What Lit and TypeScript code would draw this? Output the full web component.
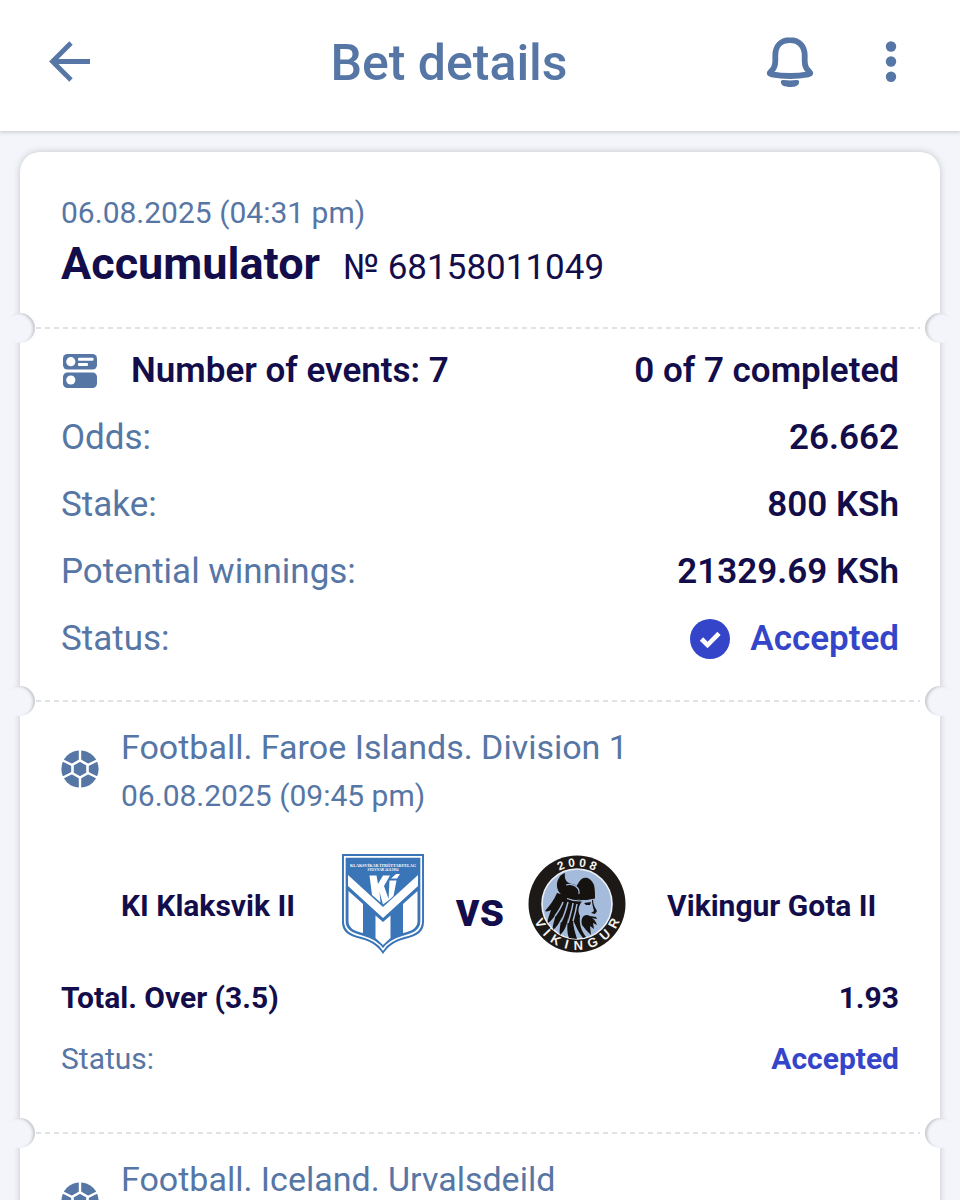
import { LitElement, html, css, svg } from "lit";
import { customElement, property } from "lit/decorators.js";

interface BetEvent {
  league: string;
  start: string;
  home: string;
  away: string;
  market: string;
  odds: string;
  status: string;
}

const backIcon = svg`<svg width="42" height="42" viewBox="0 0 42 42" fill="none" stroke="currentColor" stroke-width="4.8">
  <path d="M41 20.500H4M22 2 3.500 20.500 22 39" />
</svg>`;

const bellIcon = svg`<svg width="48" height="52" viewBox="0 0 48 52" fill="none" stroke="currentColor">
  <path stroke-width="5.800" stroke-linejoin="round" d="M24 4.200C14.500 4.200 9.300 10.500 9.300 19.500V25C9.300 30.500 7.800 32.800 5.200 35.200C3 37.300 3.300 37.800 5.800 38.300C17 40.400 31 40.400 42.200 38.300C44.700 37.800 45 37.300 42.800 35.200C40.200 32.800 38.700 30.500 38.700 25V19.500C38.700 10.500 33.500 4.200 24 4.200Z" />
  <path fill="currentColor" stroke="none" d="M17.500 44C22 44.600 26 44.600 30.500 44C32.500 43.700 33.600 45 33 47C32 50.400 28 51 24 51C20 51 16 50.400 15 47C14.400 45 15.500 43.700 17.500 44Z" />
</svg>`;

const moreIcon = svg`<svg width="12" height="42" viewBox="0 0 12 42" fill="currentColor">
  <circle cx="6" cy="5.500" r="5.200" /><circle cx="6" cy="20.500" r="5.200" /><circle cx="6" cy="35.700" r="5.200" />
</svg>`;

const eventsIcon = svg`<svg width="34" height="34" viewBox="0 0 34 34">
  <rect width="34" height="15.500" rx="4.500" fill="currentColor" />
  <rect y="18.500" width="34" height="15.500" rx="4.500" fill="currentColor" />
  <circle cx="7.800" cy="7.700" r="4.600" fill="#fff" />
  <circle cx="7.800" cy="26" r="4.600" fill="#fff" />
  <rect x="15" y="3.800" width="15.500" height="3" rx="1" fill="#fff" />
  <rect x="15" y="9" width="10" height="3" rx="1" fill="#fff" />
</svg>`;

const ballIcon = svg`<svg width="38" height="38" viewBox="-19 -19 38 38">
  <circle r="18.600" fill="currentColor" />
  <path d="M0-20V20M-18-9 18 9M18-9-18 9" stroke="#fff" stroke-width="2.400" />
  <path d="M0-8.600 7.500-4.300V4.300L0 8.600-7.500 4.300V-4.300Z" fill="currentColor" stroke="#fff" stroke-width="2.600" />
</svg>`;

const checkIcon = svg`<svg width="40" height="40" viewBox="0 0 40 40">
  <circle cx="20" cy="20" r="20" fill="currentColor" />
  <path d="m11.500 20 6 6L29 14.300" fill="none" stroke="#fff" stroke-width="4.600" />
</svg>`;

const klaksvikCrest = svg`<svg width="82" height="100" viewBox="0 0 82 100" role="img" aria-label="KI Klaksvik crest">
  <path d="M0 0H82V68C82 78 75 82 63 85C53 87.500 46 92 41 100C36 92 29 87.500 19 85C7 82 0 78 0 68Z" fill="#3a75b8" />
  <path d="M2.800 2.800H79.200V67C79.200 76 73 79.500 62 82.300C52 85 45 89.500 41 95.500C37 89.500 30 85 20 82.300C9 79.500 2.800 76 2.800 67Z" fill="none" stroke="#fff" stroke-width="1.700" />
  <path d="M6 21 41 53 76 21V32L41 64 6 32Z" fill="#fff" />
  <path d="M6.500 37 21 50V79C12 77 6.500 74 6.500 67Z M75.500 37 61 50V79C70 77 75.500 74 75.500 67Z" fill="#fff" />
  <path d="M33.500 61.500 41 68 48.500 61.500V84L41 91 33.500 84Z" fill="#fff" />
  <text x="41" y="12.500" text-anchor="middle" font-family="Liberation Serif, serif" font-weight="700" font-size="4.200" fill="#fff">KLAKSVÍKAR ÍTRÓTTARFELAG</text>
  <text x="41" y="17" text-anchor="middle" font-family="Liberation Serif, serif" font-size="3.400" fill="#fff">STOVNAÐ 24.8.1904</text>
  <path d="M27.500 21.500H34.500L36 30 41 21.500H48L42 32 47 46 41 50.500 37.500 38 38.500 48.500 33 43.500 30 41Z M47.500 26.500H54.500L51.500 42 46.500 46.500Z M49 24.500 54 20H58L55 24.500Z" fill="#fff" />
</svg>`;

const vikingurCrest = svg`<svg width="98" height="98" viewBox="-49 -49 98 98" role="img" aria-label="Vikingur crest">
  <defs>
    <path id="upper" d="M-37.500 0A37.500 37.500 0 0 1 37.500 0" />
    <path id="lower" d="M-46 0A46 46 0 0 0 46 0" />
  </defs>
  <circle r="48.500" fill="#1c1917" />
  <circle r="35" fill="#a5bbdc" stroke="#eef2f8" stroke-width="1.600" />
  <path d="M-20-11C-23-4-27 1-32 7C-30 8-28 7-26 6C-28 12-30 17-29 19C-26 17-23 13-21 10C-23 18-25 23-24 26C-19 22-17 17-15 13C-17 22-18 27-17 31C-12 27-10 20-9 14C-10 23-10 29-8 34L0 35C-2 28-4 22-4 16C-1 22 1 28 6 34L9 33C4 26 2 20 3 12C0 6 2 2 5-3L-9-8Z" fill="#15120f" />
  <path d="M-14-2C-16 4-19 8-22 12M-9-2C-11 6-13 12-16 18M-4-1C-5 6-7 12-9 19M0 0C-1 6-2 10-4 17" fill="none" stroke="#a5bbdc" stroke-width="1.500" />
  <path d="M2-22C6-29 14-27 17-19C18-15 18-10 18-5C10-3 0-4-8-6Z" fill="#15120f" />
  <path d="M-12-31C-13-24-10-21-5-20C1-19 4-14 1-9C-2-4-10-4-14-8C-20-12-22-20-18-26C-17-29-14-30-12-31Z" fill="#15120f" />
  <path d="M-11-19C-4-21 3-17 2-10M-10-5.500C-2-2 8-2.500 18-5" fill="none" stroke="#a5bbdc" stroke-width="1.200" />
  <path d="M7-1 14-2 13 1 9 1Z M15-4 16-4C16 0 18 4 20 7L18 10 14 9 17 7C16 3 15 0 15-4Z M5 21C3 13 8 9 13 12L19 13 20 15 15 14C18 16 19 18 20 21L16 19 17 25 13 22 14 31 9 26Z" fill="#15120f" />
  <g font-family="Liberation Sans, sans-serif" font-weight="700" fill="#f4f2ef" text-anchor="middle">
    <text font-size="12"><textPath href="#upper" startOffset="50%">2 0 0 8</textPath></text>
    <text font-size="13"><textPath href="#lower" startOffset="50%">V\u2002Í\u2002K\u2002I\u2002N\u2002G\u2002U\u2002R</textPath></text>
  </g>
</svg>`;

@customElement("ticket-divider")
export class TicketDivider extends LitElement {
  static styles = css`
    :host {
      display: block;
      position: relative;
      height: 30px;
    }
    .line {
      position: absolute;
      inset: 14px 20px auto 16px;
      height: 2px;
      background: repeating-linear-gradient(90deg, #dfe3e6 0 5px, transparent 5px 9px);
    }
    .notch {
      position: absolute;
      top: 0;
      width: 30px;
      height: 30px;
      border-radius: 50%;
      background: #f3f5fa;
    }
    .left {
      left: -15px;
      box-shadow: inset -3px 1px 3px -1px #c6c8ce;
    }
    .right {
      right: -15px;
      box-shadow: inset 3px 1px 3px -1px #c6c8ce;
    }
  `;

  render() {
    return html`<div class="line"></div>
      <div class="notch left"></div>
      <div class="notch right"></div>`;
  }
}

@customElement("bet-event")
export class BetEventView extends LitElement {
  @property({ attribute: false }) event!: BetEvent;

  static styles = css`
    :host {
      display: block;
      padding: 4px 41px 41px;
    }
    .head {
      display: flex;
      align-items: center;
      gap: 22px;
      color: #5676a5;
    }
    .ball {
      display: flex;
    }
    .league {
      font-size: 34px;
      line-height: 54px;
      font-weight: 400;
      margin: 0;
    }
    .start {
      display: block;
      font-size: 30px;
      line-height: 44px;
    }
    .teams {
      display: grid;
      grid-template-columns: 1fr auto auto auto 1fr;
      align-items: center;
      column-gap: 24px;
      margin: 36px 0 26px;
      color: #130e4b;
      font-weight: 700;
      font-size: 30px;
      line-height: 36px;
    }
    .team {
      padding: 4px 6px 0 0;
      text-align: center;
    }
    .home {
      padding: 4px 0 0 60px;
      text-align: left;
    }
    .crest {
      display: flex;
      justify-content: center;
      width: 98px;
    }
    .versus {
      font-size: 48px;
      line-height: 48px;
      padding: 12px 0 0;
    }
    .row {
      display: flex;
      justify-content: space-between;
      font-size: 30px;
      line-height: 36px;
      color: #130e4b;
      font-weight: 700;
      margin: 0 0 25px;
    }
    .row:last-child {
      margin: 0;
    }
    .label {
      font-weight: 400;
      color: #5676a5;
    }
    .accepted {
      color: #3445c9;
    }
  `;

  render() {
    const e = this.event;
    return html`
      <div class="head">
        <span class="ball">${ballIcon}</span>
        <div>
          <h2 class="league">${e.league}</h2>
          <time class="start">${e.start}</time>
        </div>
      </div>
      <div class="teams">
        <span class="team home">${e.home}</span>
        <span class="crest">${klaksvikCrest}</span>
        <span class="versus">vs</span>
        <span class="crest">${vikingurCrest}</span>
        <span class="team">${e.away}</span>
      </div>
      <div class="row"><span>${e.market}</span><span>${e.odds}</span></div>
      <div class="row"><span class="label">Status:</span><span class="accepted">${e.status}</span></div>
    `;
  }
}

@customElement("app-root")
export class AppRoot extends LitElement {
  private events: BetEvent[] = [
    {
      league: "Football. Faroe Islands. Division 1",
      start: "06.08.2025 (09:45 pm)",
      home: "KI Klaksvik II",
      away: "Vikingur Gota II",
      market: "Total. Over (3.5)",
      odds: "1.93",
      status: "Accepted",
    },
  ];

  static styles = css`
    :host {
      display: flex;
      flex-direction: column;
      height: 100vh;
      background: #f3f5fa;
      font-family: Roboto, "Liberation Sans", sans-serif;
      color: #130e4b;
    }
    .bar {
      display: grid;
      grid-template-columns: 1fr auto 1fr;
      align-items: center;
      flex: none;
      height: 131px;
      box-sizing: border-box;
      padding: 0 63px 8px 49px;
      background: #fff;
      color: #5676a5;
      box-shadow: 0 1px 4px #c4c6cb;
    }
    .title {
      margin: 0;
      padding: 2px 48px 0 0;
      font-size: 50px;
      line-height: 60px;
      font-weight: 500;
    }
    .icon {
      display: flex;
      padding: 0;
      border: 0;
      background: none;
      color: inherit;
      cursor: pointer;
    }
    .actions {
      display: flex;
      align-items: center;
      justify-content: flex-end;
      gap: 71px;
    }
    .scroll {
      flex: 1;
      min-height: 0;
      overflow: hidden auto;
      scrollbar-width: none;
      padding: 21px 20px;
    }
    .ticket {
      background: #fff;
      border-radius: 20px;
      box-shadow: 0 0 7px #c2c4c9;
    }
    .summary {
      padding: 43px 41px 16px;
    }
    .placed {
      display: block;
      font-size: 30px;
      line-height: 36px;
      color: #5676a5;
    }
    .kind {
      display: flex;
      align-items: baseline;
      gap: 23px;
      margin: 0;
      padding: 4px 0 0;
      font-size: 45px;
      line-height: 58px;
      font-weight: 700;
    }
    .number {
      font-size: 35px;
      font-weight: 400;
    }
    .facts {
      display: grid;
      gap: 26px;
      margin: 0;
      padding: 7px 41px 27px;
    }
    .fact {
      display: flex;
      justify-content: space-between;
      align-items: center;
      font-size: 35px;
      line-height: 41px;
      font-weight: 600;
    }
    .fact dt {
      display: flex;
      align-items: center;
      gap: 34px;
    }
    .fact dd {
      display: flex;
      align-items: center;
      gap: 20px;
      margin: 0;
    }
    .glyph {
      display: flex;
      color: #5676a5;
      padding: 0 0 0 2px;
    }
    .fact .label {
      font-weight: 400;
      color: #5676a5;
    }
    .fact .accepted {
      color: #3445c9;
    }
    .next {
      display: flex;
      align-items: center;
      gap: 22px;
      min-height: 98px;
      padding: 4px 41px 41px;
      color: #5676a5;
    }
    .league {
      align-self: flex-start;
      margin: 0;
      font-size: 34px;
      line-height: 54px;
      font-weight: 400;
    }
  `;

  render() {
    return html`
      <header class="bar">
        <button class="icon" aria-label="Back">${backIcon}</button>
        <h1 class="title">Bet details</h1>
        <div class="actions">
          <button class="icon" aria-label="Notifications">${bellIcon}</button>
          <button class="icon" aria-label="More options">${moreIcon}</button>
        </div>
      </header>
      <main class="scroll">
        <article class="ticket">
          <div class="summary">
            <time class="placed">06.08.2025 (04:31 pm)</time>
            <h2 class="kind">Accumulator <span class="number">№ 68158011049</span></h2>
          </div>
          <ticket-divider></ticket-divider>
          <dl class="facts">
            <div class="fact">
              <dt><span class="glyph">${eventsIcon}</span>Number of events: 7</dt>
              <dd>0 of 7 completed</dd>
            </div>
            <div class="fact"><dt class="label">Odds:</dt><dd>26.662</dd></div>
            <div class="fact"><dt class="label">Stake:</dt><dd>800 KSh</dd></div>
            <div class="fact"><dt class="label">Potential winnings:</dt><dd>21329.69 KSh</dd></div>
            <div class="fact"><dt class="label">Status:</dt><dd class="accepted">${checkIcon} Accepted</dd></div>
          </dl>
          ${this.events.map(
            (e) => html`<ticket-divider></ticket-divider><bet-event .event=${e}></bet-event>`
          )}
          <ticket-divider></ticket-divider>
          <div class="next">
            ${ballIcon}
            <h2 class="league">Football. Iceland. Urvalsdeild</h2>
          </div>
        </article>
      </main>
    `;
  }
}
